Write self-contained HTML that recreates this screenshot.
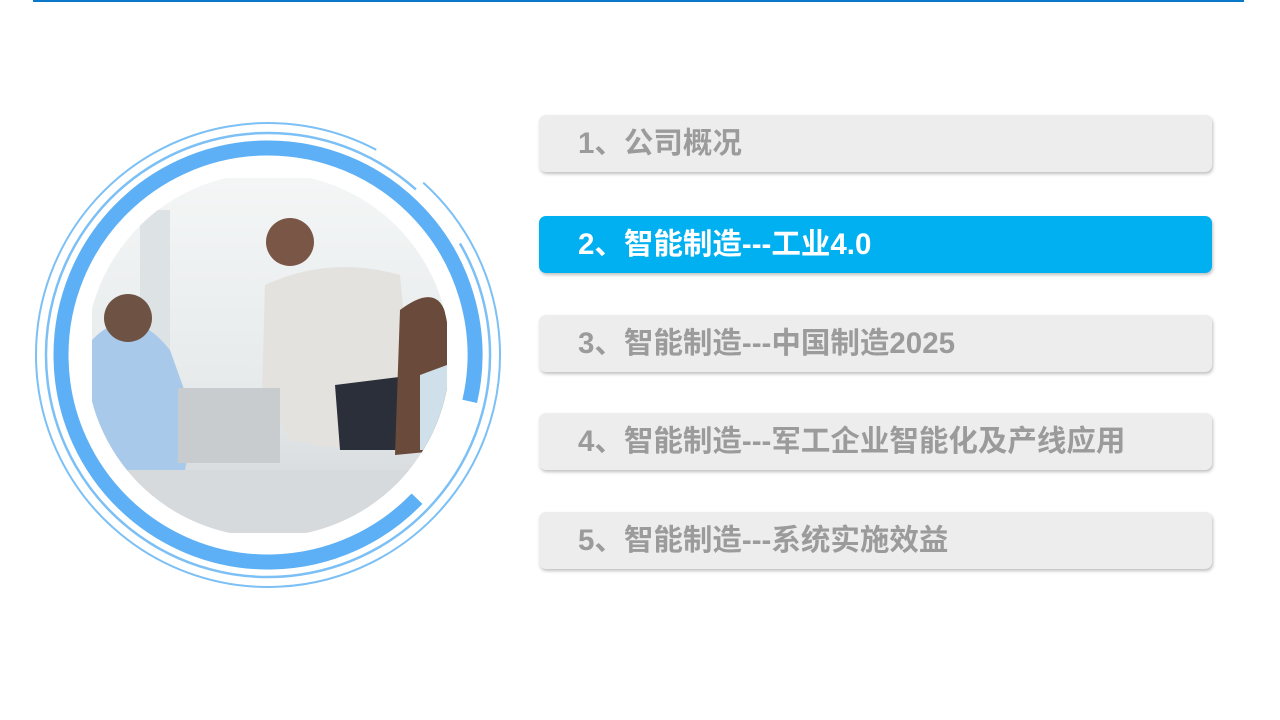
<!DOCTYPE html>
<html><head><meta charset="utf-8"><style>
body{margin:0;width:1280px;height:720px;background:#fff;position:relative;overflow:hidden;font-family:"Liberation Sans","Noto Sans CJK SC",sans-serif}
.top{position:absolute;left:33px;top:0;width:1211px;height:2px;background:#0a78c8}
.b{position:absolute;left:539px;width:673px;height:57px;border-radius:7px;background:#ededee;box-shadow:1px 2px 3px rgba(0,0,0,.25);color:#9b9b9b;font-weight:bold;font-size:29.5px;line-height:57px;padding-left:39px;box-sizing:border-box;white-space:nowrap}
.b.a{background:#00b0f0;color:#fff}
</style></head><body>
<div class="top"></div>
<svg width="540" height="620" style="position:absolute;left:0;top:0">
<defs>
<clipPath id="c"><circle cx="268" cy="355" r="182"/></clipPath>
<linearGradient id="g" x1="0" y1="0" x2="0" y2="1"><stop offset="0" stop-color="#f4f6f6"/><stop offset=".6" stop-color="#e6eaeb"/><stop offset="1" stop-color="#cfd4d7"/></linearGradient>
</defs>
<g clip-path="url(#c)">
<rect x="92" y="178" width="355" height="355" fill="url(#g)"/>
<rect x="140" y="210" width="30" height="220" fill="#dde2e4"/>
<path d="M92 340 Q130 300 170 350 L195 420 L185 470 L92 470Z" fill="#a9c9ea"/>
<circle cx="128" cy="318" r="24" fill="#6e5244"/>
<path d="M265 285 Q330 255 400 275 L410 380 L360 390 L350 450 L290 440 L262 390Z" fill="#e4e2de"/>
<path d="M335 385 L415 375 L420 450 L340 450Z" fill="#2a2f3a"/>
<circle cx="290" cy="242" r="24" fill="#7a5646"/>
<path d="M400 310 Q440 280 447 320 L447 450 L395 455 Z" fill="#6a4a3a"/>
<path d="M420 375 L447 365 L447 450 L420 450Z" fill="#cfe0ea"/>
<rect x="178" y="388" width="102" height="75" fill="#c9cccf"/>
<rect x="92" y="470" width="355" height="63" fill="#d6dadd"/>
</g>
<circle cx="268" cy="355" r="207" fill="none" stroke="#5db0f5" stroke-width="15" stroke-dasharray="1188 112" transform="rotate(44 268 355)"/>
<circle cx="268" cy="355" r="222" fill="none" stroke="#7cc0f6" stroke-width="2.5" stroke-dasharray="1324 70" transform="rotate(-30 268 355)"/>
<circle cx="268" cy="355" r="232" fill="none" stroke="#7cc0f6" stroke-width="2" stroke-dasharray="1400 58" transform="rotate(-48 268 355)"/>
</svg>
<div class="b" style="top:115px">1、公司概况</div>
<div class="b a" style="top:216px">2、智能制造---工业4.0</div>
<div class="b" style="top:315px">3、智能制造---中国制造2025</div>
<div class="b" style="top:413px">4、智能制造---军工企业智能化及产线应用</div>
<div class="b" style="top:512px">5、智能制造---系统实施效益</div>
</body></html>
